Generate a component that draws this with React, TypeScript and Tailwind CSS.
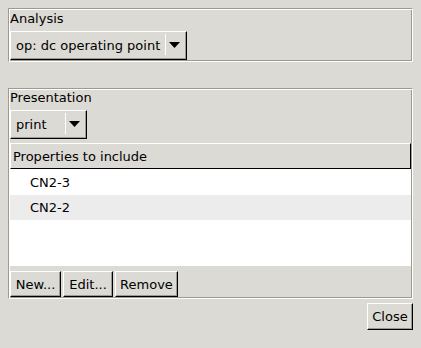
import React from "react";

const raised =
  "border border-t-white border-l-white border-r-black border-b-black shadow-[inset_-1px_-1px_0_#9e9a91]";

const groove =
  "border border-t-[#9e9a91] border-l-[#9e9a91] border-r-white border-b-white shadow-[inset_1px_1px_0_#ffffff,inset_-1px_-1px_0_#9e9a91]";

function Arrow() {
  return (
    <svg width="11" height="6" viewBox="0 0 11 6" className="block">
      <path d="M0 0H11L5.5 6Z" fill="#000" />
    </svg>
  );
}

function Combo({ value, textWidth }: { value: string; textWidth: number }) {
  return (
    <div className={`flex h-[29px] w-fit items-stretch bg-[#dcdad5] ${raised}`}>
      <div className="flex items-center pl-[5px] whitespace-nowrap" style={{ width: textWidth }}>
        {value}
      </div>
      <div className="mt-[2px] mb-[4px] w-[1px] bg-white" />
      <div className="flex w-[20px] items-center pl-[3px] pb-[1px]">
        <Arrow />
      </div>
    </div>
  );
}

function Btn({ label, width }: { label: string; width: string }) {
  return (
    <button className={`flex h-[26px] items-center justify-center bg-[#dcdad5] ${raised} ${width}`}>
      {label}
    </button>
  );
}

export default function App() {
  const rows = ["CN2-3", "CN2-2"];

  return (
    <div
      className="flex h-[348px] w-[421px] flex-col bg-[#dcdad5] px-[8px] pt-[8px] text-[13px] leading-[15px] text-black"
      style={{ fontFamily: '"DejaVu Sans", sans-serif' }}
    >
      {/* Analysis */}
      <div className={`h-[54px] w-[405px] pl-[1px] pt-[2px] ${groove}`}>
        <div className="h-[15px]">Analysis</div>
        <div className="mt-[5px]">
          <Combo value="op: dc operating point" textWidth={154} />
        </div>
      </div>

      {/* Presentation */}
      <div className={`mt-[26px] flex h-[211px] w-[405px] flex-col pl-[1px] pt-[1px] ${groove}`}>
        <div className="h-[15px]">Presentation</div>
        <div className="mt-[5px]">
          <Combo value="print" textWidth={54} />
        </div>

        <div className="mt-[4px] w-[401px]">
          <div className="flex h-[26px] items-center border border-t-white border-l-white border-r-black border-b-black bg-[#dcdad5] pl-[2px]">
            Properties to include
          </div>
          <div className="h-[97px] bg-white">
            {rows.map((r, i) => (
              <div
                key={r}
                className={`flex items-center pl-[20px] ${i === 0 ? "h-[26px] bg-white" : "h-[25px] bg-[#ececec]"}`}
              >
                {r}
              </div>
            ))}
          </div>
          <div className="flex gap-[2px] pt-[5px]">
            <Btn label="New..." width="w-[51px]" />
            <Btn label="Edit..." width="w-[50px]" />
            <Btn label="Remove" width="w-[63px]" />
          </div>
        </div>
      </div>

      <div className="mt-[4px] flex w-[405px] justify-end">
        <button className={`flex h-[27px] w-[46px] items-center justify-center bg-[#dcdad5] ${raised}`}>
          Close
        </button>
      </div>
    </div>
  );
}
